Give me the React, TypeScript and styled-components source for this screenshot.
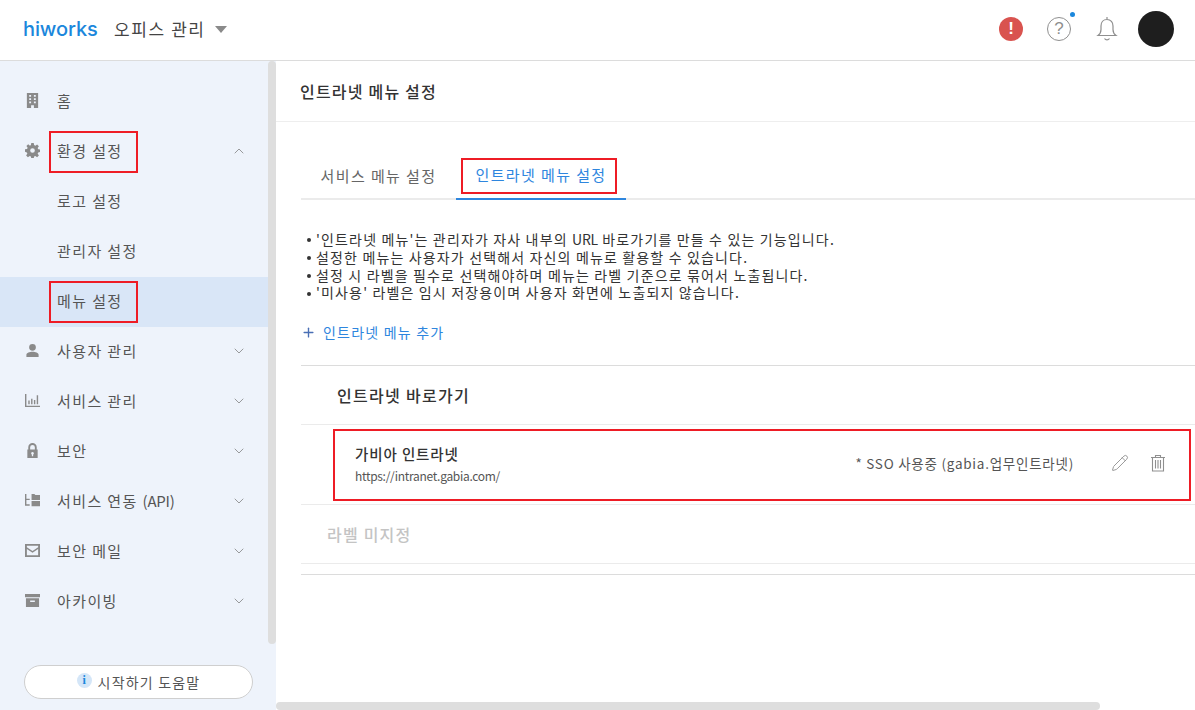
import React from 'react';
import styled, { createGlobalStyle } from 'styled-components';
import { ChevronDown, ChevronUp, Pencil, Plus } from 'lucide-react';

const FONT = `"Noto Sans CJK KR", "Noto Sans", sans-serif`;

const GlobalStyle = createGlobalStyle`
  html, body { margin: 0; padding: 0; height: 100%; overflow: hidden; background: #fff; }
  body { font-family: ${FONT}; color: #333; }
  * { box-sizing: border-box; }
`;

const Page = styled.div`
  width: 1195px;
  height: 710px;
  display: flex;
  flex-direction: column;
  overflow: hidden;
`;

const Header = styled.header`
  height: 61px;
  flex: none;
  display: flex;
  align-items: center;
  padding: 0 21px 3px 23px;
  border-bottom: 1px solid #dcdcdc;
`;

const Logo = styled.div`
  font-family: "Inter", "Liberation Sans", sans-serif;
  font-size: 20px;
  font-weight: 500;
  color: #1b87dc;
  letter-spacing: -0.1px;
  width: 91px;
`;

const OfficeTitle = styled.div`
  font-size: 17px;
  color: #444;
  letter-spacing: 1.6px;
  line-height: 24px;
`;

const Caret = styled.span`
  width: 0;
  height: 0;
  margin: 2px 0 0 9px;
  border-left: 6px solid transparent;
  border-right: 6px solid transparent;
  border-top: 7px solid #8a8a8a;
`;

const HeaderRight = styled.div`
  margin-left: auto;
  display: flex;
  align-items: center;
`;

const AlertBadge = styled.div`
  width: 24px;
  height: 24px;
  border-radius: 50%;
  background: #d9534f;
  color: #fff;
  font: 700 17px/24px "Liberation Sans", sans-serif;
  text-align: center;
  margin-right: 24px;
`;

const HelpWrap = styled.div`
  position: relative;
  width: 24px;
  height: 24px;
  margin-right: 24px;
  border: 1.5px solid #8f8f8f;
  border-radius: 50%;
  color: #8f8f8f;
  font: 400 17px/21px "Liberation Sans", sans-serif;
  text-align: center;
`;

const HelpDot = styled.span`
  position: absolute;
  top: -6px;
  right: -5px;
  width: 5px;
  height: 5px;
  border-radius: 50%;
  background: #1b87dc;
`;

const BellIcon = styled.svg`
  width: 24px;
  height: 26px;
  fill: none;
  stroke: #8f8f8f;
  stroke-width: 1.2;
`;

const Avatar = styled.div`
  width: 36px;
  height: 36px;
  border-radius: 50%;
  background: #1e1e1e;
  margin-left: 19px;
`;

const Body = styled.div`
  flex: 1;
  min-height: 0;
  display: flex;
`;

const Sidebar = styled.aside`
  width: 276px;
  flex: none;
  position: relative;
  background: #eef3fb;
  padding-top: 16px;
  display: flex;
  flex-direction: column;
`;

const SideScroll = styled.div`
  position: absolute;
  top: 0;
  right: 0;
  width: 8px;
  height: 583px;
  border-radius: 4px;
  background: #dedede;
`;

const MenuRow = styled.div<{ $selected?: boolean }>`
  height: 50px;
  flex: none;
  display: flex;
  align-items: center;
  padding: 0 0 2px 25px;
  width: 268px;
  background: ${p => (p.$selected ? '#d9e6f7' : 'transparent')};
  color: #555;
  font-size: 15px;
  line-height: 20px;
`;

const MenuIcon = styled.svg`
  width: 15px;
  height: 15px;
  margin-right: 17px;
  margin-top: -2px;
  fill: #8a8a8a;
  flex: none;
`;

const MenuLabel = styled.span<{ $sub?: boolean }>`
  position: relative;
  margin-left: ${p => (p.$sub ? '32px' : '0')};
  letter-spacing: 1.4px;
`;

const LatinPart = styled.span`
  letter-spacing: -0.2px;
`;

const RedBox = styled.span`
  position: absolute;
  top: -10px;
  bottom: -12px;
  left: -8px;
  right: -15px;
  border: 2px solid #ee1c25;
`;

const Arrow = styled.span`
  margin-left: auto;
  margin-right: 21px;
  display: flex;
  color: #777;
`;

const HelpButton = styled.button`
  position: absolute;
  left: 24px;
  top: 604px;
  width: 229px;
  height: 34px;
  background: #fff;
  border: 1px solid #cfcfcf;
  border-radius: 17px;
  display: flex;
  align-items: center;
  justify-content: center;
  font-family: ${FONT};
  font-size: 14px;
  letter-spacing: 1.2px;
  color: #555;
  padding: 0;
`;

const InfoDot = styled.span`
  width: 15px;
  height: 15px;
  border-radius: 50%;
  background: #d4e6f8;
  color: #1b87dc;
  font: 700 12px/15px "Liberation Serif", serif;
  letter-spacing: 0;
  text-align: center;
  margin: -3px 6px 0 0;
`;

const Main = styled.main`
  flex: 1;
  min-width: 0;
  position: relative;
  display: flex;
  flex-direction: column;
`;

const TitleBar = styled.div`
  height: 61px;
  flex: none;
  display: flex;
  align-items: center;
  padding: 0 0 0 24px;
  border-bottom: 1px solid #eeeeee;
  font-size: 16px;
  font-weight: 500;
  letter-spacing: 1.2px;
  color: #333;
`;

const Content = styled.div`
  padding: 28px 0 0 25px;
`;

const Tabs = styled.div`
  display: flex;
  height: 50px;
  border-bottom: 2px solid #ebebeb;
`;

const Tab = styled.div<{ $active?: boolean; $width: number }>`
  width: ${p => p.$width}px;
  height: 50px;
  display: flex;
  align-items: center;
  justify-content: center;
  font-size: 15px;
  line-height: 20px;
  letter-spacing: 1.4px;
  padding-top: 1px;
  color: ${p => (p.$active ? '#2e86de' : '#666')};
  border-bottom: ${p => (p.$active ? '2px solid #2e86de' : '0')};
`;

const TabLabel = styled.span`
  position: relative;
`;

const TabBox = styled.span`
  position: absolute;
  top: -7px;
  bottom: -9px;
  left: -14px;
  right: -10px;
  border: 2px solid #ee1c25;
`;

const Notes = styled.ul`
  list-style: none;
  margin: 31px 0 0;
  padding: 0 0 0 6px;
`;

const Note = styled.li`
  height: 17.8px;
  font-size: 14px;
  line-height: 17.8px;
  color: #333;
  letter-spacing: 1.15px;
  white-space: nowrap;
  &::before {
    content: '';
    display: inline-block;
    width: 4px;
    height: 4px;
    border-radius: 50%;
    background: #333;
    margin: 0 5px 2px 0;
    vertical-align: middle;
  }
`;

const AddLink = styled.div`
  margin-top: 20px;
  height: 20px;
  display: flex;
  align-items: center;
  font-size: 14px;
  color: #2e86de;
  letter-spacing: 1.2px;
  svg { margin-right: 7px; color: #4a6fb5; }
`;

const SectionHead = styled.div`
  margin-top: 23px;
  border-top: 1px solid #dcdcdc;
  border-bottom: 1px solid #ebebeb;
  height: 60px;
  display: flex;
  align-items: center;
  padding: 0 0 0 36px;
  font-size: 16px;
  font-weight: 500;
  color: #333;
  letter-spacing: 1.3px;
`;

const LinkRow = styled.div`
  margin: 4px 4px 0 32px;
  height: 72px;
  border: 2px solid #ee1c25;
  display: flex;
  align-items: center;
  padding: 0 23px 4px 20px;
`;

const LinkInfo = styled.div`
  display: flex;
  flex-direction: column;
  gap: 3px;
`;

const LinkName = styled.div`
  font-size: 14.5px;
  font-weight: 500;
  color: #333;
  letter-spacing: 0.9px;
`;

const LinkUrl = styled.div`
  font-size: 12px;
  color: #555;
  letter-spacing: -0.3px;
`;

const SsoNote = styled.div`
  margin-left: auto;
  margin-right: 37px;
  font-size: 13.5px;
  letter-spacing: 0.75px;
  color: #555;
`;

const IconAction = styled.span`
  display: flex;
  color: #8f8f8f;
  & + & { margin-left: 21px; }
`;

const TrashIcon = styled.svg`
  width: 16px;
  height: 18px;
  fill: none;
  stroke: #8f8f8f;
  stroke-width: 1.1;
`;

const UnlabeledHead = styled.div`
  margin-top: 3px;
  height: 60px;
  border-top: 1px solid #ebebeb;
  border-bottom: 1px solid #ebebeb;
  display: flex;
  align-items: center;
  padding-left: 26px;
  font-size: 16px;
  font-weight: 500;
  color: #c4c4c4;
  letter-spacing: 1.2px;
`;

const BottomRule = styled.div`
  margin-top: 10px;
  border-top: 1px solid #dcdcdc;
`;

const HScroll = styled.div`
  position: absolute;
  left: 0;
  bottom: 0;
  width: 824px;
  height: 8px;
  border-radius: 4px;
  background: #dedede;
`;

const icons: Record<string, React.ReactNode> = {
  home: <path d="M2 0h12v16H9.500v-3h-3v3H2zM4.500 2v2h2V2zm5 0v2h2V2zm-5 3.500v2h2v-2zm5 0v2h2v-2zm-5 3.500v2h2V9zm5 0v2h2V9z" fillRule="evenodd" />,
  gear: <path d="M6.700 0h2.600l.4 2.200 1.300.6 1.900-1.300 1.900 1.900-1.300 1.900.6 1.300 2.200.4v2.600l-2.200.4-.6 1.300 1.300 1.900-1.900 1.900-1.900-1.300-1.300.6-.4 2.200H6.700l-.4-2.200-1.300-.6-1.900 1.300-1.900-1.900 1.300-1.900-.6-1.300L0 9.300V6.700l2.200-.4.6-1.300-1.300-1.900 1.900-1.900L5.300 2.800l1-.6zM8 5.500a2.500 2.500 0 1 0 0 5 2.500 2.500 0 0 0 0-5z" fillRule="evenodd" />,
  user: <path d="M8 1a3.600 3.600 0 1 1 0 7.200A3.600 3.600 0 0 1 8 1zM1.500 15v-2.500C1.500 10.300 5 9.300 8 9.300s6.500 1 6.500 3.200V15z" />,
  chart: <path d="M0 1h1.500v12.500H16V15H0zM3.500 8H5v4H3.500zm3-2H8v6H6.500zm3 1.500H11V12H9.500zm3-5H14V12h-1.500z" />,
  lock: <path d="M8 0a4.500 4.500 0 0 1 4.500 4.500V7h1v9h-11V7h1V4.500A4.500 4.500 0 0 1 8 0zm0 2a2.500 2.500 0 0 0-2.500 2.500V7h5V4.500A2.500 2.500 0 0 0 8 2zm0 7.500a1.500 1.500 0 0 0-.7 2.800V14h1.400v-1.700A1.500 1.500 0 0 0 8 9.500z" fillRule="evenodd" />,
  api: <path d="M0 1h1.500v5H5v1.500H1.500V12H5v1.500H0zM7 1h3l1 1.200h5V7.500H7zm0 7.500h9V14H7z" />,
  mail: <path d="M0 1h16v14H0zM2 3v1.500l6 4 6-4V3zm0 3.500V13h12V6.500l-6 4z" fillRule="evenodd" />,
  archive: <path d="M0 1h16v3.500H0zm1 4.500h14V15H1zm4.500 2.500v1.500h5V8z" fillRule="evenodd" />,
};

const menu: {
  icon?: string;
  label: React.ReactNode;
  open?: boolean;
  more?: boolean;
  marked?: boolean;
  selected?: boolean;
}[] = [
  { icon: 'home', label: '홈' },
  { icon: 'gear', label: '환경 설정', open: true, marked: true },
  { label: '로고 설정' },
  { label: '관리자 설정' },
  { label: '메뉴 설정', selected: true, marked: true },
  { icon: 'user', label: '사용자 관리', more: true },
  { icon: 'chart', label: '서비스 관리', more: true },
  { icon: 'lock', label: '보안', more: true },
  { icon: 'api', label: <>서비스 연동 <LatinPart>(API)</LatinPart></>, more: true },
  { icon: 'mail', label: '보안 메일', more: true },
  { icon: 'archive', label: '아카이빙', more: true },
];

const notes: React.ReactNode[] = [
  <>'인트라넷 메뉴'는 관리자가 자사 내부의 <LatinPart>URL</LatinPart> 바로가기를 만들 수 있는 기능입니다.</>,
  '설정한 메뉴는 사용자가 선택해서 자신의 메뉴로 활용할 수 있습니다.',
  '설정 시 라벨을 필수로 선택해야하며 메뉴는 라벨 기준으로 묶어서 노출됩니다.',
  "'미사용' 라벨은 임시 저장용이며 사용자 화면에 노출되지 않습니다.",
];

export default function App() {
  return (
    <Page>
      <GlobalStyle />
      <Header>
        <Logo>hiworks</Logo>
        <OfficeTitle>오피스 관리</OfficeTitle>
        <Caret />
        <HeaderRight>
          <AlertBadge>!</AlertBadge>
          <HelpWrap>
            ?
            <HelpDot />
          </HelpWrap>
          <BellIcon viewBox="0 0 24 26">
            <path d="M12 1v2.500M12 3.500c-3.800 0-6 3-6 6.500v3.500c0 3-1 4.500-3 6h18c-2-1.500-3-3-3-6V10c0-3.500-2.200-6.500-6-6.500z" />
            <path d="M9.500 22.500a3 3 0 0 0 5 0" />
          </BellIcon>
          <Avatar />
        </HeaderRight>
      </Header>
      <Body>
        <Sidebar>
          <SideScroll />
          {menu.map((item, i) => (
            <MenuRow key={i} $selected={item.selected}>
              {item.icon && <MenuIcon viewBox="0 0 16 16">{icons[item.icon]}</MenuIcon>}
              <MenuLabel $sub={!item.icon}>
                {item.label}
                {item.marked && <RedBox />}
              </MenuLabel>
              {item.open && (
                <Arrow>
                  <ChevronUp size={16} strokeWidth={1.1} />
                </Arrow>
              )}
              {item.more && (
                <Arrow>
                  <ChevronDown size={16} strokeWidth={1.1} />
                </Arrow>
              )}
            </MenuRow>
          ))}
          <HelpButton>
            <InfoDot>i</InfoDot>
            시작하기 도움말
          </HelpButton>
        </Sidebar>
        <Main>
          <TitleBar>인트라넷 메뉴 설정</TitleBar>
          <Content>
            <Tabs>
              <Tab $width={155}>서비스 메뉴 설정</Tab>
              <Tab $width={170} $active>
                <TabLabel>
                  인트라넷 메뉴 설정
                  <TabBox />
                </TabLabel>
              </Tab>
            </Tabs>
            <Notes>
              {notes.map((n, i) => (
                <Note key={i}>{n}</Note>
              ))}
            </Notes>
            <AddLink>
              <Plus size={15} strokeWidth={2.2} />
              인트라넷 메뉴 추가
            </AddLink>
            <SectionHead>인트라넷 바로가기</SectionHead>
            <LinkRow>
              <LinkInfo>
                <LinkName>가비아 인트라넷</LinkName>
                <LinkUrl>https://intranet.gabia.com/</LinkUrl>
              </LinkInfo>
              <SsoNote>* SSO 사용중 (gabia.업무인트라넷)</SsoNote>
              <IconAction>
                <Pencil size={18} strokeWidth={1.2} />
              </IconAction>
              <IconAction>
                <TrashIcon viewBox="0 0 16 18">
                  <path d="M1 3.500h14M5.500 3.500V1.500h5v2M2.500 3.500V17h11V3.500M5.500 6v8.500M8 6v8.500M10.500 6v8.500" />
                </TrashIcon>
              </IconAction>
            </LinkRow>
            <UnlabeledHead>라벨 미지정</UnlabeledHead>
            <BottomRule />
          </Content>
          <HScroll />
        </Main>
      </Body>
    </Page>
  );
}
